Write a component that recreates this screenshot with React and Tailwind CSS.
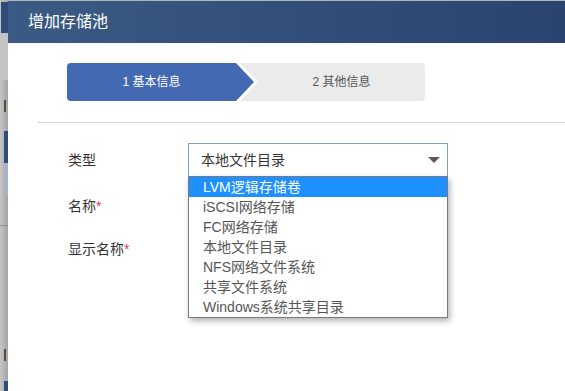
import React from 'react';

const font = { fontFamily: '"Liberation Sans", "Noto Sans CJK SC", sans-serif' };

const options = [
    'LVM逻辑存储卷',
    'iSCSI网络存储',
    'FC网络存储',
    '本地文件目录',
    'NFS网络文件系统',
    '共享文件系统',
    'Windows系统共享目录',
];

const BackdropStrip = () => (
    <div className="flex w-[8px] shrink-0 flex-col bg-gradient-to-r from-[#c6c6c6] to-[#a4a4a4]">
        <div className="h-[2px]" />
        <div className="ml-[1px] h-[31px] bg-[#2f4c78]" />
        <div className="h-[47px] bg-[#c4c4c4]" />
        <div className="h-[20px]" />
        <div className="ml-[4px] h-[12px] w-[2px] bg-[#5a4a3a]" />
        <div className="h-[19px]" />
        <div className="ml-[4px] h-[32px] bg-[#2f4c78]" />
        <div className="ml-[4px] h-[32px] bg-[#a9b1c2]" />
        <div className="h-[30px]" />
        <div className="h-px bg-[#8e8e8e]" />
        <div className="h-[123px]" />
        <div className="ml-[4px] h-[12px] w-[2px] bg-[#5a4a3a]" />
        <div className="h-[20px]" />
        <div className="ml-[4px] flex-1 bg-[#2f4c78]" />
    </div>
);

const Stepper = () => (
    <div className="relative ml-[59px] mt-[20px] flex h-[38px] w-[358px] overflow-hidden rounded bg-[#ebebeb] text-[12px]">
        <div className="absolute inset-y-0 left-0 w-[191px] bg-white [clip-path:polygon(0_0,173px_0,191px_50%,173px_100%,0_100%)]" />
        <div className="relative flex w-[187px] items-center justify-center bg-[#4269b1] pr-[18px] text-white [clip-path:polygon(0_0,169px_0,187px_50%,169px_100%,0_100%)]">
            1 基本信息
        </div>
        <div className="relative ml-[4px] flex flex-1 items-center justify-center text-[#555]">
            2 其他信息
        </div>
    </div>
);

const TypeSelect = () => (
    <div className="relative h-[34px] w-[260px]">
        <div className="flex h-full items-center justify-between border border-[#7f9cc8] bg-white pl-[12px] pr-[7px] text-[#333]">
            <span>本地文件目录</span>
            <span className="h-0 w-0 border-x-[6px] border-t-[6px] border-x-transparent border-t-[#5a5a5a]" />
        </div>
        <ul className="absolute left-0 top-[33px] z-10 w-full border border-[#7a7a7a] bg-white shadow-[2px_3px_6px_rgba(0,0,0,0.3)]">
            {options.map((option, index) => (
                <li
                    key={index}
                    className={`h-[20px] pl-[14px] leading-[20px] ${index === 0 ? 'bg-[#1e90ff] text-white' : 'text-[#555]'}`}
                >
                    {option}
                </li>
            ))}
        </ul>
    </div>
);

const Label = ({ text, required }) => (
    <div className="w-[120px] shrink-0 text-[#333]">
        {text}
        {required && <span className="text-[#e53935]">*</span>}
    </div>
);

export default function App() {
    return (
        <div style={font} className="flex h-[391px] w-[565px] overflow-hidden bg-[#b4b4b4] text-[14px]">
            <BackdropStrip />
            <div className="flex flex-1 flex-col pt-px">
                <div className="flex h-[42px] shrink-0 items-center bg-gradient-to-r from-[#3b5b84] to-[#2a446f] pl-[20px] text-[16px] text-white">
                    增加存储池
                </div>
                <div className="flex flex-1 flex-col bg-white">
                    <Stepper />
                    <div className="ml-[30px] mt-[21px] h-px bg-[#d4d4de]" />
                    <div className="ml-[60px] mt-[20px] flex flex-col">
                        <div className="flex h-[34px] items-center">
                            <Label text="类型" />
                            <TypeSelect />
                        </div>
                        <div className="mt-[12px] flex h-[34px] items-center">
                            <Label text="名称" required />
                        </div>
                        <div className="mt-[9px] flex h-[34px] items-center">
                            <Label text="显示名称" required />
                        </div>
                    </div>
                </div>
            </div>
        </div>
    );
}
